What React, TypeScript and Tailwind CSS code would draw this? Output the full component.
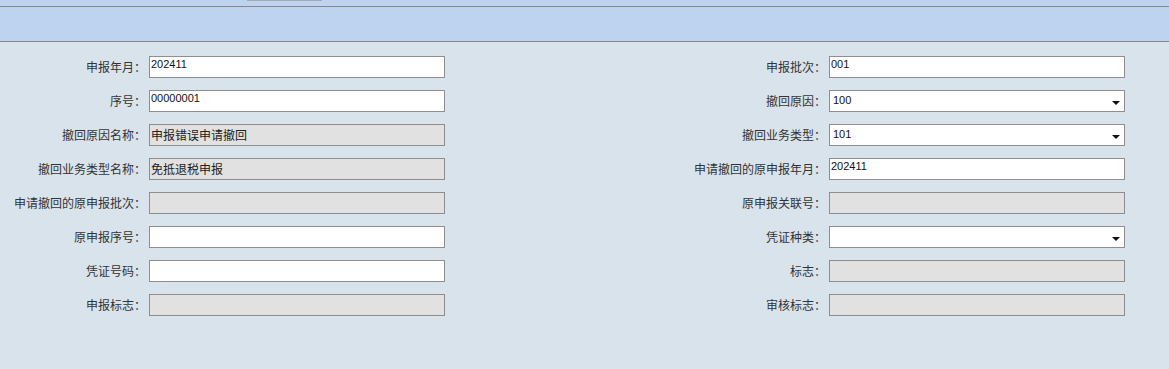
type Field = {
  label: string
  value?: string
  kind: 'text' | 'disabled' | 'select'
}

const rows: [Field, Field][] = [
  [{ label: '申报年月：', value: '202411', kind: 'text' }, { label: '申报批次：', value: '001', kind: 'text' }],
  [{ label: '序号：', value: '00000001', kind: 'text' }, { label: '撤回原因：', value: '100', kind: 'select' }],
  [{ label: '撤回原因名称：', value: '申报错误申请撤回', kind: 'disabled' }, { label: '撤回业务类型：', value: '101', kind: 'select' }],
  [{ label: '撤回业务类型名称：', value: '免抵退税申报', kind: 'disabled' }, { label: '申请撤回的原申报年月：', value: '202411', kind: 'text' }],
  [{ label: '申请撤回的原申报批次：', kind: 'disabled' }, { label: '原申报关联号：', kind: 'disabled' }],
  [{ label: '原申报序号：', kind: 'text' }, { label: '凭证种类：', kind: 'select' }],
  [{ label: '凭证号码：', kind: 'text' }, { label: '标志：', kind: 'disabled' }],
  [{ label: '申报标志：', kind: 'disabled' }, { label: '审核标志：', kind: 'disabled' }]
]

const cjk = { fontFamily: '"Noto Sans CJK SC", sans-serif' }
const latin = { fontFamily: '"Liberation Sans", "Noto Sans CJK SC", sans-serif' }

function Box({ field }: { field: Field }) {
  if (field.kind === 'disabled') {
    return (
      <div
        className="w-[296px] h-[22px] border border-[#8e8e8e] bg-[#e1e1e1] flex items-center pl-[1px] text-[12px] text-[#222] leading-none"
        style={cjk}
      >
        {field.value}
      </div>
    )
  }
  if (field.kind === 'select') {
    return (
      <div className="w-[296px] h-[22px] border border-[#8e8e8e] bg-white flex items-start justify-between pl-[3px] pr-[4px] pt-[4px]">
        <span className="text-[11px] text-[#111] leading-none" style={latin}>
          {field.value}
        </span>
        <svg width="8" height="4" viewBox="0 0 8 4" className="mt-[6px]">
          <path d="M0 0H8L4 4Z" fill="#111" />
        </svg>
      </div>
    )
  }
  return (
    <div
      className="w-[296px] h-[22px] border border-[#8e8e8e] bg-white pl-[1px] pt-[2px] text-[11px] text-[#111] leading-none"
      style={latin}
    >
      {field.value}
    </div>
  )
}

export default function App() {
  return (
    <div className="w-[1169px] h-[369px] bg-[#d9e3ec] flex flex-col overflow-hidden">
      {/* top strip with tab remnant */}
      <div className="h-[6px] bg-[#bdd3f0] relative">
        <div className="absolute left-[247px] top-0 w-[75px] h-[1px] bg-[#aaaaaa]" />
      </div>
      <div className="h-[36px] bg-[#bdd3f0] border-y border-[#888]" />

      {/* form */}
      <div className="flex flex-col gap-[12px] pt-[14px]">
        {rows.map(([l, r], i) => (
          <div key={i} className="flex items-center h-[22px]">
            <div className="w-[146px] text-right text-[12px] text-[#333] whitespace-nowrap" style={cjk}>
              {l.label}
            </div>
            <div className="ml-[3px]">
              <Box field={l} />
            </div>
            <div className="flex-1 text-right pr-[3px] text-[12px] text-[#333] whitespace-nowrap" style={cjk}>
              {r.label}
            </div>
            <div className="mr-[44px]">
              <Box field={r} />
            </div>
          </div>
        ))}
      </div>
    </div>
  )
}
